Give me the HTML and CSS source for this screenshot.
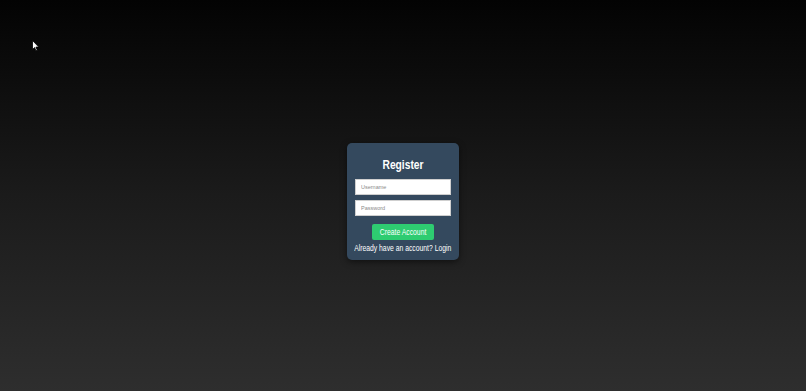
FILE: index.html
```html
<!DOCTYPE html>
<html>
<head>
<meta charset="utf-8">
<link rel="stylesheet" href="styles.css">
</head>
<body>
<svg class="cursor" width="8" height="12" viewBox="0 0 8 12"><path d="M0.5 0.5 L0.5 9.5 L2.6 7.6 L4 10.8 L5.3 10.2 L3.9 7.1 L6.8 7.1 Z" fill="#fff" stroke="#000" stroke-width="0.8"/></svg>
<main class="stage">
  <form class="card">
    <h2 class="title"><span class="sq sq-title">Register</span></h2>
    <input class="field" type="text" placeholder="Username">
    <input class="field field-gap" type="password" placeholder="Password">
    <button class="btn" type="button"><span class="sq">Create Account</span></button>
    <p class="foot"><span class="sq">Already have an account? Login</span></p>
  </form>
</main>
</body>
</html>
```
FILE: styles.css
```css
html, body {
  margin: 0;
  height: 100%;
}
body {
  background: linear-gradient(to bottom, #030303 0%, #1b1b1b 50%, #2e2e2e 100%);
  font-family: "Liberation Sans", Arial, sans-serif;
  color: #fff;
  overflow: hidden;
}
.cursor {
  position: absolute;
  left: 32px;
  top: 40px;
}
.stage {
  height: 100%;
  display: flex;
  align-items: center;
  justify-content: center;
  box-sizing: border-box;
  padding-top: 12px;
}
.card {
  width: 112px;
  box-sizing: border-box;
  background: #34495e;
  border-radius: 5px;
  padding: 15px 8px 7px;
  display: flex;
  flex-direction: column;
  align-items: center;
  box-shadow: 0 2px 6px rgba(0,0,0,0.5);
  margin: 0;
}
.sq {
  display: inline-block;
  transform: scaleX(0.8);
  white-space: nowrap;
}
.sq-title {
  transform: scaleX(0.82);
}
.title {
  margin: 0 0 7px;
  font-size: 12.5px;
  line-height: 14px;
  font-weight: bold;
  color: #fff;
}
.field {
  width: 96px;
  height: 16px;
  box-sizing: border-box;
  border: 1px solid #cfcfcf;
  background: #fff;
  padding: 0 5px;
  font-family: "Liberation Sans", Arial, sans-serif;
  font-size: 5.5px;
  outline: none;
  margin: 0;
}
.field::placeholder {
  color: #8a8a8a;
}
.field-gap {
  margin-top: 5px;
}
.btn {
  margin-top: 8px;
  width: 62px;
  height: 16px;
  border: none;
  border-radius: 2px;
  background: #2ecc71;
  color: #fff;
  font-family: "Liberation Sans", Arial, sans-serif;
  font-size: 8.5px;
  padding: 0;
  display: flex;
  align-items: center;
  justify-content: center;
}
.foot {
  margin: 3px 0 0;
  font-size: 8.5px;
  line-height: 10px;
  color: #fff;
  width: 96px;
  display: flex;
  justify-content: center;
}
```
